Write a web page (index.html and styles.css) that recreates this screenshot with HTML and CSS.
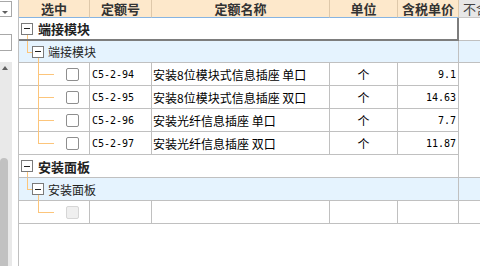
FILE: index.html
```html
<!DOCTYPE html>
<html lang="zh-CN">
<head>
    <meta charset="UTF-8">
    <title>定额选择</title>
    <link rel="stylesheet" href="styles.css">
</head>
<body>
    <div class="page">
        <!-- Panel izquierdo recortado: combo, campo y barra de desplazamiento -->
        <aside class="side">
            <div class="combo"><span class="caret"></span></div>
            <div class="field"></div>
            <div class="track">
                <span class="arrow-up"></span>
                <div class="thumb"></div>
            </div>
        </aside>

        <div class="grid">
            <div class="row head">
                <div class="cell">选中</div>
                <div class="cell">定额号</div>
                <div class="cell">定额名称</div>
                <div class="cell">单位</div>
                <div class="cell">含税单价</div>
                <div class="cell more">不含税单价</div>
            </div>

            <!-- Grupo: 端接模块 -->
            <div class="row group current">
                <div class="cell tree span"><span class="toggle"></span><b>端接模块</b><i class="stem-a"></i></div>
                <div class="cell"></div>
            </div>
            <div class="row sub short">
                <div class="cell tree span"><i class="elbow"></i><span class="toggle inner"></span><span>端接模块</span><i class="stem-b"></i></div>
                <div class="cell"></div>
            </div>
            <div class="row item">
                <div class="cell tree"><i class="branch"></i><i class="pass"></i><span class="check"></span></div>
                <div class="cell code">C5-2-94</div>
                <div class="cell name">安装8位模块式信息插座 单口</div>
                <div class="cell unit">个</div>
                <div class="cell price">9.1</div>
                <div class="cell blank"></div>
            </div>
            <div class="row item">
                <div class="cell tree"><i class="branch"></i><i class="pass"></i><span class="check"></span></div>
                <div class="cell code">C5-2-95</div>
                <div class="cell name">安装8位模块式信息插座 双口</div>
                <div class="cell unit">个</div>
                <div class="cell price">14.63</div>
                <div class="cell blank"></div>
            </div>
            <div class="row item">
                <div class="cell tree"><i class="branch"></i><i class="pass"></i><span class="check"></span></div>
                <div class="cell code">C5-2-96</div>
                <div class="cell name">安装光纤信息插座 单口</div>
                <div class="cell unit">个</div>
                <div class="cell price">7.7</div>
                <div class="cell blank"></div>
            </div>
            <div class="row item">
                <div class="cell tree"><i class="branch"></i><span class="check"></span></div>
                <div class="cell code">C5-2-97</div>
                <div class="cell name">安装光纤信息插座 双口</div>
                <div class="cell unit">个</div>
                <div class="cell price">11.87</div>
                <div class="cell blank"></div>
            </div>

            <!-- Grupo: 安装面板 -->
            <div class="row group">
                <div class="cell tree span"><span class="toggle"></span><b>安装面板</b><i class="stem-a"></i></div>
                <div class="cell"></div>
            </div>
            <div class="row sub">
                <div class="cell tree span"><i class="elbow"></i><span class="toggle inner"></span><span>安装面板</span><i class="stem-b"></i></div>
                <div class="cell"></div>
            </div>
            <div class="row item">
                <div class="cell tree"><i class="branch"></i><span class="check off"></span></div>
                <div class="cell code"></div>
                <div class="cell name"></div>
                <div class="cell unit"></div>
                <div class="cell price"></div>
                <div class="cell"></div>
            </div>
        </div>
    </div>
</body>
</html>
```

FILE: styles.css
```css
body {
    margin: 0;
    background-color: #ffffff;
    font-family: "Noto Sans CJK SC", "Liberation Sans", sans-serif;
    font-size: 12px;
    color: #111111;
}

.page {
    display: flex;
    height: 266px;
    overflow: hidden;
}

/* Panel izquierdo */
.side {
    width: 18px;
    flex: none;
    display: flex;
    flex-direction: column;
}

.combo {
    width: 12px;
    height: 16px;
    margin-top: 1px;
    box-sizing: border-box;
    border: 1px solid #a8a8a8;
    border-left: none;
    display: flex;
    align-items: flex-end;
    padding: 0 0 2px 2px;
}

.caret {
    width: 0;
    height: 0;
    border-top: 3px solid #606060;
    border-left: 3px solid transparent;
    border-right: 3px solid transparent;
}

.field {
    width: 12px;
    height: 17px;
    margin-top: 17px;
    box-sizing: border-box;
    border: 1px solid #a8a8a8;
    border-left: none;
}

.track {
    width: 12px;
    flex: 1;
    margin-top: 11px;
    background-color: #e9e9e9;
    display: flex;
    flex-direction: column;
    align-items: flex-start;
}

.arrow-up {
    margin: 4px 0 0 2px;
    width: 0;
    height: 0;
    border-bottom: 4px solid #606060;
    border-left: 3px solid transparent;
    border-right: 3px solid transparent;
}

.thumb {
    margin-top: auto;
    width: 8px;
    height: 108px;
    background-color: #c1c1c1;
    border-radius: 4px 4px 0 0;
}

/* Tabla */
.grid {
    flex: 1;
    border-left: 1px solid #c0c0c0;
    overflow: hidden;
}

.row {
    display: grid;
    grid-template-columns: 71px 62px 178px 68px 61px 1fr;
    height: 23px;
}

.cell {
    box-sizing: border-box;
    border-right: 1px solid #c0c0c0;
    border-bottom: 1px solid #c0c0c0;
    display: flex;
    align-items: center;
    white-space: nowrap;
    overflow: hidden;
    min-width: 0;
}

.row .cell:last-child {
    border-right: none;
}

.head {
    height: 18px;
    background-color: #fde8cb;
}

.head .cell {
    justify-content: center;
    font-size: 13px;
    font-weight: bold;
    color: #333333;
    border-right-color: #dec8aa;
    border-bottom-color: #86b4e2;
}

.head .more {
    justify-content: flex-start;
    padding-left: 4px;
    font-weight: normal;
    color: #444444;
    background-color: #e7e7e7;
    border-bottom-color: #c8c8c8;
}

.span {
    grid-column: span 5;
}

.tree {
    position: relative;
    overflow: visible;
}

.group b {
    margin-left: 5px;
    font-size: 13px;
    color: #222222;
}

.current .span {
    border-right: 2px solid #7d7d7d;
    border-bottom: 2px solid #7d7d7d;
}

.sub {
    background-color: #e5f3fe;
}

.sub.short {
    height: 22px;
}

.sub .span span:last-of-type {
    margin-left: 4px;
    font-size: 12px;
    color: #222222;
}

.toggle {
    width: 12px;
    height: 12px;
    margin-left: 2px;
    box-sizing: border-box;
    border: 1px solid #7a7a7a;
    background-color: #ffffff;
    display: flex;
    align-items: center;
    justify-content: center;
    flex: none;
    position: relative;
    z-index: 1;
}

.toggle::after {
    content: "";
    width: 6px;
    height: 1px;
    background-color: #222222;
}

.toggle.inner {
    margin-left: 13px;
}

/* Líneas del árbol */
.tree i {
    position: absolute;
    border-color: #fcc57b;
    border-style: solid;
    border-width: 0;
}

.stem-a {
    left: 8px;
    top: 16px;
    bottom: 0;
    border-left-width: 1px !important;
}

.elbow {
    left: 8px;
    top: 0;
    width: 5px;
    height: 50%;
    border-left-width: 1px !important;
    border-bottom-width: 1px !important;
}

.stem-b {
    left: 19px;
    top: 16px;
    bottom: -1px;
    border-left-width: 1px !important;
}

.branch {
    left: 19px;
    top: 0;
    width: 15px;
    height: 50%;
    border-left-width: 1px !important;
    border-bottom-width: 1px !important;
}

.pass {
    left: 19px;
    top: 50%;
    bottom: -1px;
    border-left-width: 1px !important;
}

.check {
    width: 13px;
    height: 13px;
    margin-left: 47px;
    box-sizing: border-box;
    border: 1px solid #8e8e8e;
    border-radius: 2px;
    background-color: #ffffff;
}

.check.off {
    background-color: #efefef;
    border-color: #d6d6d6;
}

.code {
    padding-left: 2px;
    font-family: "DejaVu Sans Mono", "Liberation Mono", monospace;
    font-size: 10px;
    color: #000000;
}

.name {
    padding-left: 1px;
    color: #000000;
}

.unit {
    justify-content: center;
    color: #000000;
}

.price {
    justify-content: flex-end;
    padding-right: 2px;
    font-family: "DejaVu Sans Mono", "Liberation Mono", monospace;
    font-size: 10px;
    color: #000000;
}

.blank {
    border-bottom: none;
}
```
